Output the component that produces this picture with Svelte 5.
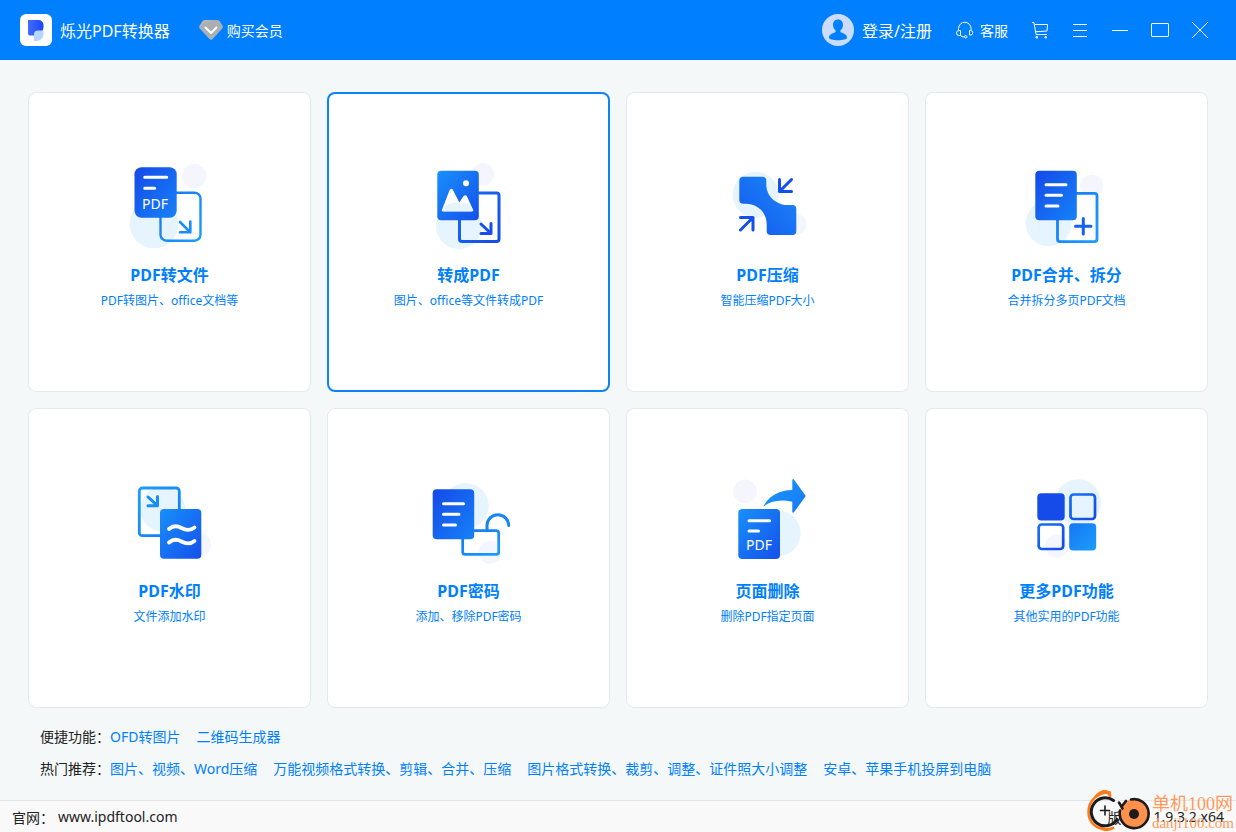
<script>
  let activeId = "to-pdf";

  const cards = [
    { id: "to-file", title: "PDF转文件", desc: "PDF转图片、office文档等" },
    { id: "to-pdf", title: "转成PDF", desc: "图片、office等文件转成PDF" },
    { id: "compress", title: "PDF压缩", desc: "智能压缩PDF大小" },
    { id: "merge", title: "PDF合并、拆分", desc: "合并拆分多页PDF文档" },
    { id: "watermark", title: "PDF水印", desc: "文件添加水印" },
    { id: "password", title: "PDF密码", desc: "添加、移除PDF密码" },
    { id: "delete", title: "页面删除", desc: "删除PDF指定页面" },
    { id: "more", title: "更多PDF功能", desc: "其他实用的PDF功能" },
  ];

  const linkRows = [
    { label: "便捷功能：", links: ["OFD转图片", "二维码生成器"] },
    {
      label: "热门推荐：",
      links: [
        "图片、视频、Word压缩",
        "万能视频格式转换、剪辑、合并、压缩",
        "图片格式转换、裁剪、调整、证件照大小调整",
        "安卓、苹果手机投屏到电脑",
      ],
    },
  ];

  function selectCard(id) {
    activeId = id;
  }
</script>

<!-- Shared gradients for the card icons -->
<svg class="defs" width="0" height="0" aria-hidden="true">
  <defs>
    <linearGradient id="deep" x1="0" y1="0" x2="1" y2="1">
      <stop offset="0" stop-color="#1549e8" />
      <stop offset="1" stop-color="#1682f8" />
    </linearGradient>
    <linearGradient id="light" x1="0" y1="0" x2="1" y2="1">
      <stop offset="0" stop-color="#1890fb" />
      <stop offset="1" stop-color="#1550ea" />
    </linearGradient>
    <linearGradient id="sky" x1="0" y1="0" x2="1" y2="1">
      <stop offset="0" stop-color="#1676f5" />
      <stop offset="1" stop-color="#1b9dfa" />
    </linearGradient>
    <linearGradient id="skyBack" x1="0" y1="0" x2="1" y2="1">
      <stop offset="0" stop-color="#1b9dfa" />
      <stop offset="1" stop-color="#1676f5" />
    </linearGradient>
    <linearGradient id="royal" x1="0" y1="0" x2="1" y2="1">
      <stop offset="0" stop-color="#1670f3" />
      <stop offset="1" stop-color="#154be8" />
    </linearGradient>
    <linearGradient id="squeeze" x1="0" y1="1" x2="1" y2="0">
      <stop offset="0" stop-color="#1556ec" />
      <stop offset="1" stop-color="#1b8bfa" />
    </linearGradient>
  </defs>
</svg>

<div class="window">
  <header>
    <div class="brand">
      <svg width="32" height="32" viewBox="0 0 32 32" aria-hidden="true">
        <defs>
          <linearGradient id="logo" x1="0" y1="0" x2="1" y2="0">
            <stop offset="0" stop-color="#3f6df8" />
            <stop offset="1" stop-color="#1c44fb" />
          </linearGradient>
        </defs>
        <rect width="32" height="32" rx="6" fill="#fff" />
        <path d="M8 6h10.500a5 5 0 0 1 5 5v2a8.500 8.500 0 0 1-8.500 8.500H10a2 2 0 0 1-2-2z" fill="url(#logo)" />
        <path d="M14 20a3.500 3.500 0 0 1 3.500-3.500h6v3.500a7 7 0 0 1-7 7H14z" fill="#b5d7ff" />
      </svg>
      <h1>烁光PDF转换器</h1>
    </div>
    <button class="vip">
      <svg width="24" height="20" viewBox="0 0 24 20" aria-hidden="true">
        <path d="M6 0h12q1.500 0 2.500 1.200l3 4.600q.8 1.400-.3 2.700L13.500 19q-1.500 1.600-3 0L.8 8.500Q-.3 7.200.5 5.800l3-4.600Q4.500 0 6 0z" fill="#b4b6ba" />
        <path d="M.5 6.500 5 4l7-4h6l5.500 6.500L12 20z" fill="#a7aaae" opacity=".6" />
        <path d="M6.500 7.500 12 13l5.500-5.500" fill="none" stroke="#fff" stroke-width="2" stroke-linecap="round" stroke-linejoin="round" />
      </svg>
      购买会员
    </button>

    <div class="tools">
      <button class="login">
        <svg width="32" height="32" viewBox="0 0 32 32" aria-hidden="true">
          <circle cx="16" cy="16" r="16" fill="#ccdcff" />
          <path d="M16 5.500c3 0 5 2.200 5 5.300 0 2.400-1 4.400-2.600 5.600v1.600c1.600 1.200 6.600 1.800 6.600 5.500 0 2-4 2.700-9 2.700s-9-.7-9-2.700c0-3.700 5-4.300 6.600-5.500v-1.600C12 15.200 11 13.200 11 10.800c0-3.100 2-5.300 5-5.300z" fill="#0080ff" />
        </svg>
        登录/注册
      </button>
      <button class="service">
        <svg width="18" height="18" viewBox="0 0 18 18" fill="none" stroke="#fff" aria-hidden="true">
          <path d="M2.500 9V7.500a6 6 0 0 1 12.500 0V9" />
          <path d="M4.500 9.500v5H3A2.500 2.500 0 0 1 3 9.500zM13.500 9.500v4.500h1a2.200 2.200 0 0 0 0-4.500zM4.500 14.500q1 1.500 4 1.500" />
          <circle cx="9.700" cy="15.800" r="1.200" />
        </svg>
        客服
      </button>
      <button class="tool" aria-label="购物车">
        <svg width="18" height="18" viewBox="0 0 18 18" fill="none" stroke="#fff" aria-hidden="true">
          <path d="M1 1.500h2l2 12h11M3.500 3.500h13l-.5 6.500-11.500.8" />
          <path d="M5 15.500h1.500V17H5zM14 15.500h1.500V17H14z" />
        </svg>
      </button>
      <button class="tool" aria-label="菜单">
        <svg width="18" height="18" viewBox="0 0 18 18" stroke="#fff" aria-hidden="true">
          <path d="M2 3.500h14M2 9.500h14M2 15.500h14" />
        </svg>
      </button>
      <button class="tool" aria-label="最小化">
        <svg width="18" height="18" viewBox="0 0 18 18" stroke="#fff" aria-hidden="true">
          <path d="M1 9.500h16" />
        </svg>
      </button>
      <button class="tool" aria-label="最大化">
        <svg width="18" height="18" viewBox="0 0 18 18" fill="none" stroke="#fff" aria-hidden="true">
          <rect x=".5" y="2.500" width="17" height="13" rx=".5" />
        </svg>
      </button>
      <button class="tool" aria-label="关闭">
        <svg width="18" height="18" viewBox="0 0 18 18" stroke="#fff" aria-hidden="true">
          <path d="M1 1l16 16M17 1L1 17" />
        </svg>
      </button>
    </div>
  </header>

  <main>
    {#each cards as card}
      <button class="card" class:active={card.id === activeId} on:click={() => selectCard(card.id)}>
        <svg class="art" viewBox="0 0 99 99" fill="none" stroke-linecap="round" stroke-linejoin="round" aria-hidden="true">
          {#if card.id === "to-file"}
            <circle cx="74.300" cy="19" r="12.300" fill="#f5f6fd" />
            <circle cx="34" cy="67" r="24.300" fill="#e6f4fe" />
            <rect x="40.500" y="35.700" width="40" height="48" rx="6" stroke="url(#sky)" stroke-width="2.400" />
            <path d="M60 65l10.300 10.300M60 75.300h10.300V64.500" stroke="#188df8" stroke-width="2.600" />
            <rect x="14.500" y="10.200" width="42.200" height="50.500" rx="7" fill="url(#deep)" />
            <path d="M24.700 20.300h22M24.700 31.300h10" stroke="#fff" stroke-width="3" />
            <text x="22" y="52">PDF</text>
          {:else if card.id === "to-pdf"}
            <circle cx="63.700" cy="17.300" r="11.300" fill="#f5f6fd" />
            <circle cx="40" cy="69" r="23" fill="#e6f4fe" />
            <rect x="40.500" y="36" width="39.500" height="48.500" rx="2.500" stroke="url(#royal)" stroke-width="3" />
            <path d="M62 67l10 9.500M62 76.500h10V66.500" stroke="#154fea" stroke-width="3" />
            <rect x="18.300" y="13.700" width="41.500" height="49.500" rx="4" fill="url(#light)" />
            <circle cx="47" cy="26.300" r="3" fill="#fff" />
            <path d="M23.500 53.500l7.700-20q1.100-2 2.200 0l6.900 13.500 4.700-7.300q1.300-1.600 2.300 0l6.300 13.800z" fill="#fff" stroke="#fff" stroke-width="1.500" />
            <path d="M26 48.500q6-3 14-3 7 0 11.500 2.500l2 5.500q0 1-1 1h-29z" fill="#e6f4fe" />
          {:else if card.id === "compress"}
            <circle cx="37.700" cy="37.700" r="23" fill="#e6f4fe" />
            <circle cx="77.300" cy="67.300" r="11.300" fill="#f5f6fd" />
            <path d="M25.300 19.700h19q4 0 4 4v4C48.300 39 58 48 70 48h4.300q4 0 4 4v22q0 4-4 4H52.700q-4 0-4-4v-7C48.700 55 39 46.700 28 46.700h-2.700q-4 0-4-4v-19q0-4 4-4z" fill="url(#squeeze)" />
            <path d="M73.500 22.500L61.500 34.500M61.500 22.500v12h12M22.500 73l12.500-12.500M22.500 60.500H35V73" stroke="#154fea" stroke-width="3" />
          {:else if card.id === "merge"}
            <circle cx="74.700" cy="29" r="11.600" fill="#f5f6fd" />
            <circle cx="31.700" cy="66.300" r="23" fill="#e6f4fe" />
            <rect x="40.500" y="36.300" width="39.500" height="48.300" rx="2.500" stroke="url(#sky)" stroke-width="2.800" />
            <path d="M58.500 69.300h15.500M66.300 61.500V77" stroke="#1560ef" stroke-width="3" />
            <rect x="18.300" y="13.700" width="41.500" height="49.500" rx="4" fill="url(#deep)" />
            <path d="M29 27.700h20M29 38.300h15.500M29 49h12" stroke="#fff" stroke-width="3" />
          {:else if card.id === "watermark"}
            <circle cx="42.700" cy="36.300" r="22.500" fill="#e6f4fe" />
            <circle cx="79.300" cy="71.700" r="11.700" fill="#f5f6fd" />
            <rect x="19.300" y="15" width="40" height="47.700" rx="3" stroke="url(#skyBack)" stroke-width="2.800" />
            <path d="M28 24l9.500 8.700M28 32.700h9.500V23.500" stroke="#188df8" stroke-width="3" />
            <rect x="40" y="36" width="41.300" height="49.700" rx="4" fill="url(#light)" />
            <path d="M49 56c4-3.500 8-3.500 12.500-1s8.500 3 13-.5M49 69.500c4-3.500 8-3.500 12.500-1s8.500 3 13-.5" stroke="#fff" stroke-width="3.800" />
          {:else if card.id === "password"}
            <circle cx="46.700" cy="33" r="23" fill="#e6f4fe" />
            <rect x="43.700" y="57.700" width="36" height="23.700" rx="2.500" fill="#fff" />
            <circle cx="71" cy="79.300" r="11.600" fill="#f5f6fd" />
            <rect x="43.700" y="57.700" width="36" height="23.700" rx="2.500" stroke="url(#sky)" stroke-width="2.700" />
            <path d="M68 57v-4.500a10.800 10.800 0 0 1 21.700 0" stroke="#1884f8" stroke-width="3" />
            <rect x="13.700" y="16.300" width="41.500" height="50" rx="4" fill="url(#deep)" />
            <path d="M24.500 30.700h20M24.500 41.300h15.500M24.500 52h12" stroke="#fff" stroke-width="3" />
          {:else if card.id === "delete"}
            <circle cx="27" cy="18.300" r="11.800" fill="#f5f6fd" />
            <circle cx="59.700" cy="60.300" r="23" fill="#e6f4fe" />
            <rect x="20.300" y="36" width="41.700" height="50" rx="4" fill="url(#light)" />
            <path d="M31 47.700h20.500M31 58h9.500" stroke="#fff" stroke-width="3" />
            <text x="28" y="76.500">PDF</text>
            <path d="M45 33.700Q54 17.500 74.300 17V7q.6-1.700 1.800-.2l11 15.200q.8 1 0 2L76.100 39q-1.200 1.500-1.800 0V28.700Q57 24.500 45 33.700z" fill="url(#skyBack)" />
          {:else}
            <circle cx="61" cy="29.300" r="23" fill="#e6f4fe" />
            <circle cx="39.700" cy="73.300" r="11.700" fill="#f5f6fd" />
            <rect x="20.300" y="20.200" width="27.400" height="27.200" rx="4" fill="#154be8" />
            <rect x="53.500" y="21.500" width="24.500" height="24.500" rx="3" stroke="url(#royal)" stroke-width="2.700" />
            <rect x="21.700" y="51.500" width="24.500" height="24.500" rx="3" stroke="url(#royal)" stroke-width="2.700" />
            <rect x="52.200" y="50.200" width="27" height="27.200" rx="4" fill="url(#sky)" />
          {/if}
        </svg>
        <strong>{card.title}</strong>
        <span>{card.desc}</span>
      </button>
    {/each}
  </main>

  <nav>
    {#each linkRows as row}
      <div class="link-row">
        <span>{row.label}</span>
        <div class="links">
          {#each row.links as link}
            <a href="#top">{link}</a>
          {/each}
        </div>
      </div>
    {/each}
  </nav>

  <footer>
    <p>官网：<a href="#site">www.ipdftool.com</a></p>
    <p>版本：<span>1.9.3.2.x64</span></p>
    <div class="stamp">
      <svg width="64" height="42" viewBox="0 0 64 42" fill="none" stroke-linecap="round" aria-hidden="true">
        <path d="M24 2.500C12 2 2.500 10 2.500 22c0 10 7 17 19 18" stroke="#ff7a1a" stroke-width="2.500" />
        <path d="M10 6.500Q17-1 22 2.500l2 3M13 35q5 7 14 3" stroke="#ff7a1a" stroke-width="3" />
        <path d="M27.500 10.500A14 14 0 1 0 31 29.500" stroke="#1d1b1c" stroke-width="3" />
        <path d="M14.500 20.500h9M19 16v9" stroke="#1d1b1c" stroke-width="1.600" />
        <circle cx="48" cy="24" r="14.500" fill="#ff914d" />
        <path d="M45 9.500a14.500 14.500 0 1 1-11 11M33 12.500l3.500 6M40 11l-4 5" stroke="#1d1b1c" stroke-width="2.600" />
        <circle cx="48" cy="24" r="5" fill="#1d1b1c" />
      </svg>
      <div class="stamp-text">
        <b>单机100网</b>
        <i>danji100.com</i>
      </div>
    </div>
  </footer>
</div>

<style>
  :global(body) {
    margin: 0;
  }

  * {
    box-sizing: border-box;
  }

  .defs {
    position: absolute;
  }

  .window {
    display: flex;
    flex-direction: column;
    min-height: 100vh;
    background: #f4f8f9;
    font-family: "Noto Sans", "Noto Sans CJK SC", sans-serif;
    font-size: 14px;
    color: #222;
  }

  button {
    margin: 0;
    padding: 0;
    border: none;
    background: none;
    font: inherit;
    color: inherit;
    cursor: pointer;
  }

  a {
    text-decoration: none;
  }

  header {
    display: flex;
    align-items: center;
    height: 60px;
    padding: 0 16px 0 20px;
    background: #0080ff;
    color: #fff;
    white-space: nowrap;
  }

  .brand,
  .vip,
  .tools,
  .login,
  .service {
    display: flex;
    align-items: center;
  }

  .brand {
    gap: 8px;
    margin-right: 29px;
  }

  h1 {
    margin: 0;
    font-size: 16px;
    font-weight: 400;
  }

  .vip {
    gap: 4px;
  }

  .tools {
    margin-left: auto;
  }

  .login {
    gap: 8px;
    margin-right: 24px;
    font-size: 16px;
  }

  .service {
    gap: 6px;
    margin-right: 12px;
  }

  .tool {
    display: grid;
    place-items: center;
    width: 40px;
    height: 40px;
  }

  main {
    flex: 1;
    display: grid;
    grid-template-columns: repeat(4, 1fr);
    grid-auto-rows: 1fr;
    gap: 16px;
    padding: 32px 28px 0;
  }

  .card {
    display: flex;
    flex-direction: column;
    align-items: center;
    justify-content: center;
    min-height: 260px;
    padding-bottom: 17px;
    background: #fff;
    border-radius: 8px;
    box-shadow: inset 0 0 0 1px #e2eaee;
    color: #0080ff;
  }

  .card.active,
  .card:hover {
    box-shadow: inset 0 0 0 2px #0d84f5;
  }

  .art {
    width: 99px;
    height: 99px;
    margin-bottom: 7px;
  }

  .art text {
    fill: #fff;
    font-size: 14px;
    font-weight: 400;
    font-family: "Noto Sans", sans-serif;
  }

  .card strong {
    font-size: 16px;
    line-height: 24px;
    font-weight: 700;
  }

  .card span {
    margin-top: 5px;
    font-size: 12px;
    line-height: 18px;
  }

  nav {
    padding: 13px 40px 15px;
  }

  .link-row {
    display: flex;
    line-height: 32px;
  }

  .link-row > span {
    flex: none;
  }

  .links {
    display: flex;
    flex-wrap: wrap;
    column-gap: 16px;
  }

  .links a {
    color: #0080ff;
  }

  footer {
    position: relative;
    display: flex;
    justify-content: space-between;
    align-items: center;
    height: 32px;
    padding: 0 12px;
    border-top: 1px solid #e3e6e9;
    background: #f9f9f9;
  }

  footer p {
    display: flex;
    gap: 4px;
    margin: 0;
  }

  footer a {
    color: inherit;
  }

  .stamp {
    position: absolute;
    right: 2px;
    bottom: 0;
    display: flex;
    align-items: flex-end;
    gap: 2px;
    pointer-events: none;
  }

  .stamp-text {
    display: flex;
    flex-direction: column;
    color: #ff9a5c;
    font-family: "Liberation Serif", "Noto Sans CJK SC", serif;
    white-space: nowrap;
  }

  .stamp-text b {
    font-size: 18px;
    line-height: 20px;
    font-weight: 400;
  }

  .stamp-text i {
    font-size: 15px;
    line-height: 18px;
    font-style: normal;
  }
</style>
